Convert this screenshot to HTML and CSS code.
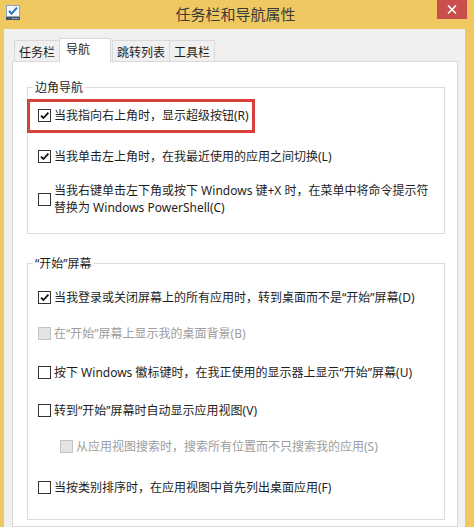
FILE: index.html
```html
<!DOCTYPE html>
<html lang="zh-CN">
<head>
<meta charset="utf-8">
<title>任务栏和导航属性</title>
<link rel="stylesheet" href="styles.css">
</head>
<body>
<div class="window">
  <div class="titlebar">
    <div class="tb-left">
      <svg class="app-icon" width="15" height="16" viewBox="0 0 15 16">
        <rect x="0.5" y="0.5" width="13" height="11" fill="#f5f8fc" stroke="#8fa6bf"/>
        <path d="M3 6 L5.6 8.6 L11 2.6" stroke="#1f6fc4" stroke-width="2" fill="none"/>
        <rect x="0" y="12" width="14" height="3" fill="#4b5159"/>
        <rect x="6" y="13" width="2" height="1" fill="#8cc8f2"/>
        <rect x="9" y="13" width="2" height="1" fill="#8cc8f2"/>
        <rect x="12" y="13" width="1" height="1" fill="#8cc8f2"/>
      </svg>
    </div>
    <div class="title">任务栏和导航属性</div>
    <div class="tb-right">
      <div class="close">
        <svg width="10" height="9" viewBox="0 0 10 9">
          <path d="M1 0.5 L9 8.5 M9 0.5 L1 8.5" stroke="#fff" stroke-width="1.6"/>
        </svg>
      </div>
    </div>
  </div>
  <div class="client">
    <div class="tabs">
      <div class="tab t1">任务栏</div>
      <div class="tab selected">导航</div>
      <div class="tab t3">跳转列表</div>
      <div class="tab t4">工具栏</div>
    </div>
    <div class="panel">
      <fieldset class="group g1">
        <legend>边角导航</legend>
        <div class="row highlight"><span class="cb checked"><svg width="11" height="11" viewBox="0 0 11 11"><path d="M2 5.6 L4.4 8 L9.4 2.6" stroke="#111" stroke-width="1.8" fill="none"/></svg></span><span class="lbl">当我指向右上角时，显示超级按钮(R)</span></div>
        <div class="row r2"><span class="cb checked"><svg width="11" height="11" viewBox="0 0 11 11"><path d="M2 5.6 L4.4 8 L9.4 2.6" stroke="#111" stroke-width="1.8" fill="none"/></svg></span><span class="lbl">当我单击左上角时，在我最近使用的应用之间切换(L)</span></div>
        <div class="row r3"><span class="cb"></span><span class="lbl">当我右键单击左下角或按下 Windows 键+X 时，在菜单中将命令提示符<br>替换为 Windows PowerShell(C)</span></div>
      </fieldset>
      <fieldset class="group g2">
        <legend>“开始”屏幕</legend>
        <div class="row s1"><span class="cb checked"><svg width="11" height="11" viewBox="0 0 11 11"><path d="M2 5.6 L4.4 8 L9.4 2.6" stroke="#111" stroke-width="1.8" fill="none"/></svg></span><span class="lbl">当我登录或关闭屏幕上的所有应用时，转到桌面而不是“开始”屏幕(D)</span></div>
        <div class="row s2 disabled"><span class="cb"></span><span class="lbl">在“开始”屏幕上显示我的桌面背景(B)</span></div>
        <div class="row s3"><span class="cb"></span><span class="lbl">按下 Windows 徽标键时，在我正使用的显示器上显示“开始”屏幕(U)</span></div>
        <div class="row s4"><span class="cb"></span><span class="lbl">转到“开始”屏幕时自动显示应用视图(V)</span></div>
        <div class="row s5 disabled indent"><span class="cb"></span><span class="lbl">从应用视图搜索时，搜索所有位置而不只搜索我的应用(S)</span></div>
        <div class="row s6"><span class="cb"></span><span class="lbl">当按类别排序时，在应用视图中首先列出桌面应用(F)</span></div>
      </fieldset>
    </div>
  </div>
</div>
</body>
</html>
```

FILE: styles.css
```css
html, body {
  margin: 0;
  padding: 0;
  background: #f0c862;
}
body {
  font-family: "Noto Sans", "Noto Sans CJK SC", sans-serif;
  font-size: 12px;
  color: #1e1e1e;
}
.window {
  width: 474px;
  height: 527px;
  overflow: hidden;
  background: #f0c862;
  display: flex;
  flex-direction: column;
}
.titlebar {
  height: 29px;
  flex: none;
  display: grid;
  grid-template-columns: 1fr auto 1fr;
}
.tb-left {
  display: flex;
  align-items: flex-start;
}
.app-icon {
  margin: 5px 0 0 6px;
}
.title {
  font-size: 15px;
  line-height: 29px;
  color: #3a3a3a;
  padding-right: 3px;
}
.tb-right {
  display: flex;
  justify-content: flex-end;
  align-items: flex-start;
}
.close {
  width: 30px;
  height: 19px;
  margin-right: 7px;
  background: #c94e4c;
  display: flex;
  align-items: center;
  justify-content: center;
}
.client {
  flex: 1;
  margin: 0 9px 0 4px;
  background: #f0f0f0;
  padding: 9px 7px 0 8px;
  display: flex;
  flex-direction: column;
  min-height: 0;
}
.tabs {
  height: 23px;
  display: flex;
  align-items: flex-end;
  position: relative;
  z-index: 1;
  flex: none;
}
.tab {
  box-sizing: border-box;
  height: 21px;
  border: 1px solid #d9d9d9;
  border-bottom: none;
  background: #f0f0f0;
  text-align: center;
  line-height: 17px;
  padding-top: 3px;
  white-space: nowrap;
}
.t1 { width: 45px; margin-left: 2px; border-right: none; }
.t3 { width: 58px; margin-left: 1px; }
.t4 { width: 45px; border-left: none; }
.tab.selected {
  width: 52px;
  height: 24px;
  margin-bottom: -1px;
  background: #fff;
  padding-top: 2px;
  text-align: left;
  padding-left: 6px;
}
.panel {
  flex: 1;
  background: #fff;
  border: 1px solid #d9d9d9;
  padding: 17px 12px 0 14px;
}
.group {
  margin: 0;
  border: 1px solid #dcdcdc;
  padding: 0 6px 0 5px;
  min-width: 0;
}
.group legend {
  padding: 0 2px;
  line-height: 17px;
}
.g1 { padding-bottom: 17px; }
.g2 { margin-top: 21px; padding-bottom: 23px; }
.row {
  display: flex;
  align-items: center;
  padding-left: 5px;
  line-height: 17px;
  white-space: nowrap;
}
.cb {
  box-sizing: border-box;
  width: 13px;
  height: 13px;
  border: 1px solid #333;
  background: #fff;
  margin-right: 3px;
  flex: none;
  display: flex;
}
.disabled .cb {
  border-color: #c4c4c4;
  background: #e3e3e3;
}
.disabled .lbl { color: #9d9d9d; }
.indent { padding-left: 27px; }
.highlight {
  width: fit-content;
  margin: 3px 0 0 -6px;
  border: 3px solid #d8403d;
  padding: 5px 3px 6px 8px;
}
.r2 { margin-top: 15px; }
.r3 { margin-top: 17px; }
.s1 { margin-top: 17px; }
.s2 { margin-top: 19px; }
.s3 { margin-top: 22px; }
.s4 { margin-top: 21px; }
.s5 { margin-top: 19px; }
.s6 { margin-top: 24px; }
```
